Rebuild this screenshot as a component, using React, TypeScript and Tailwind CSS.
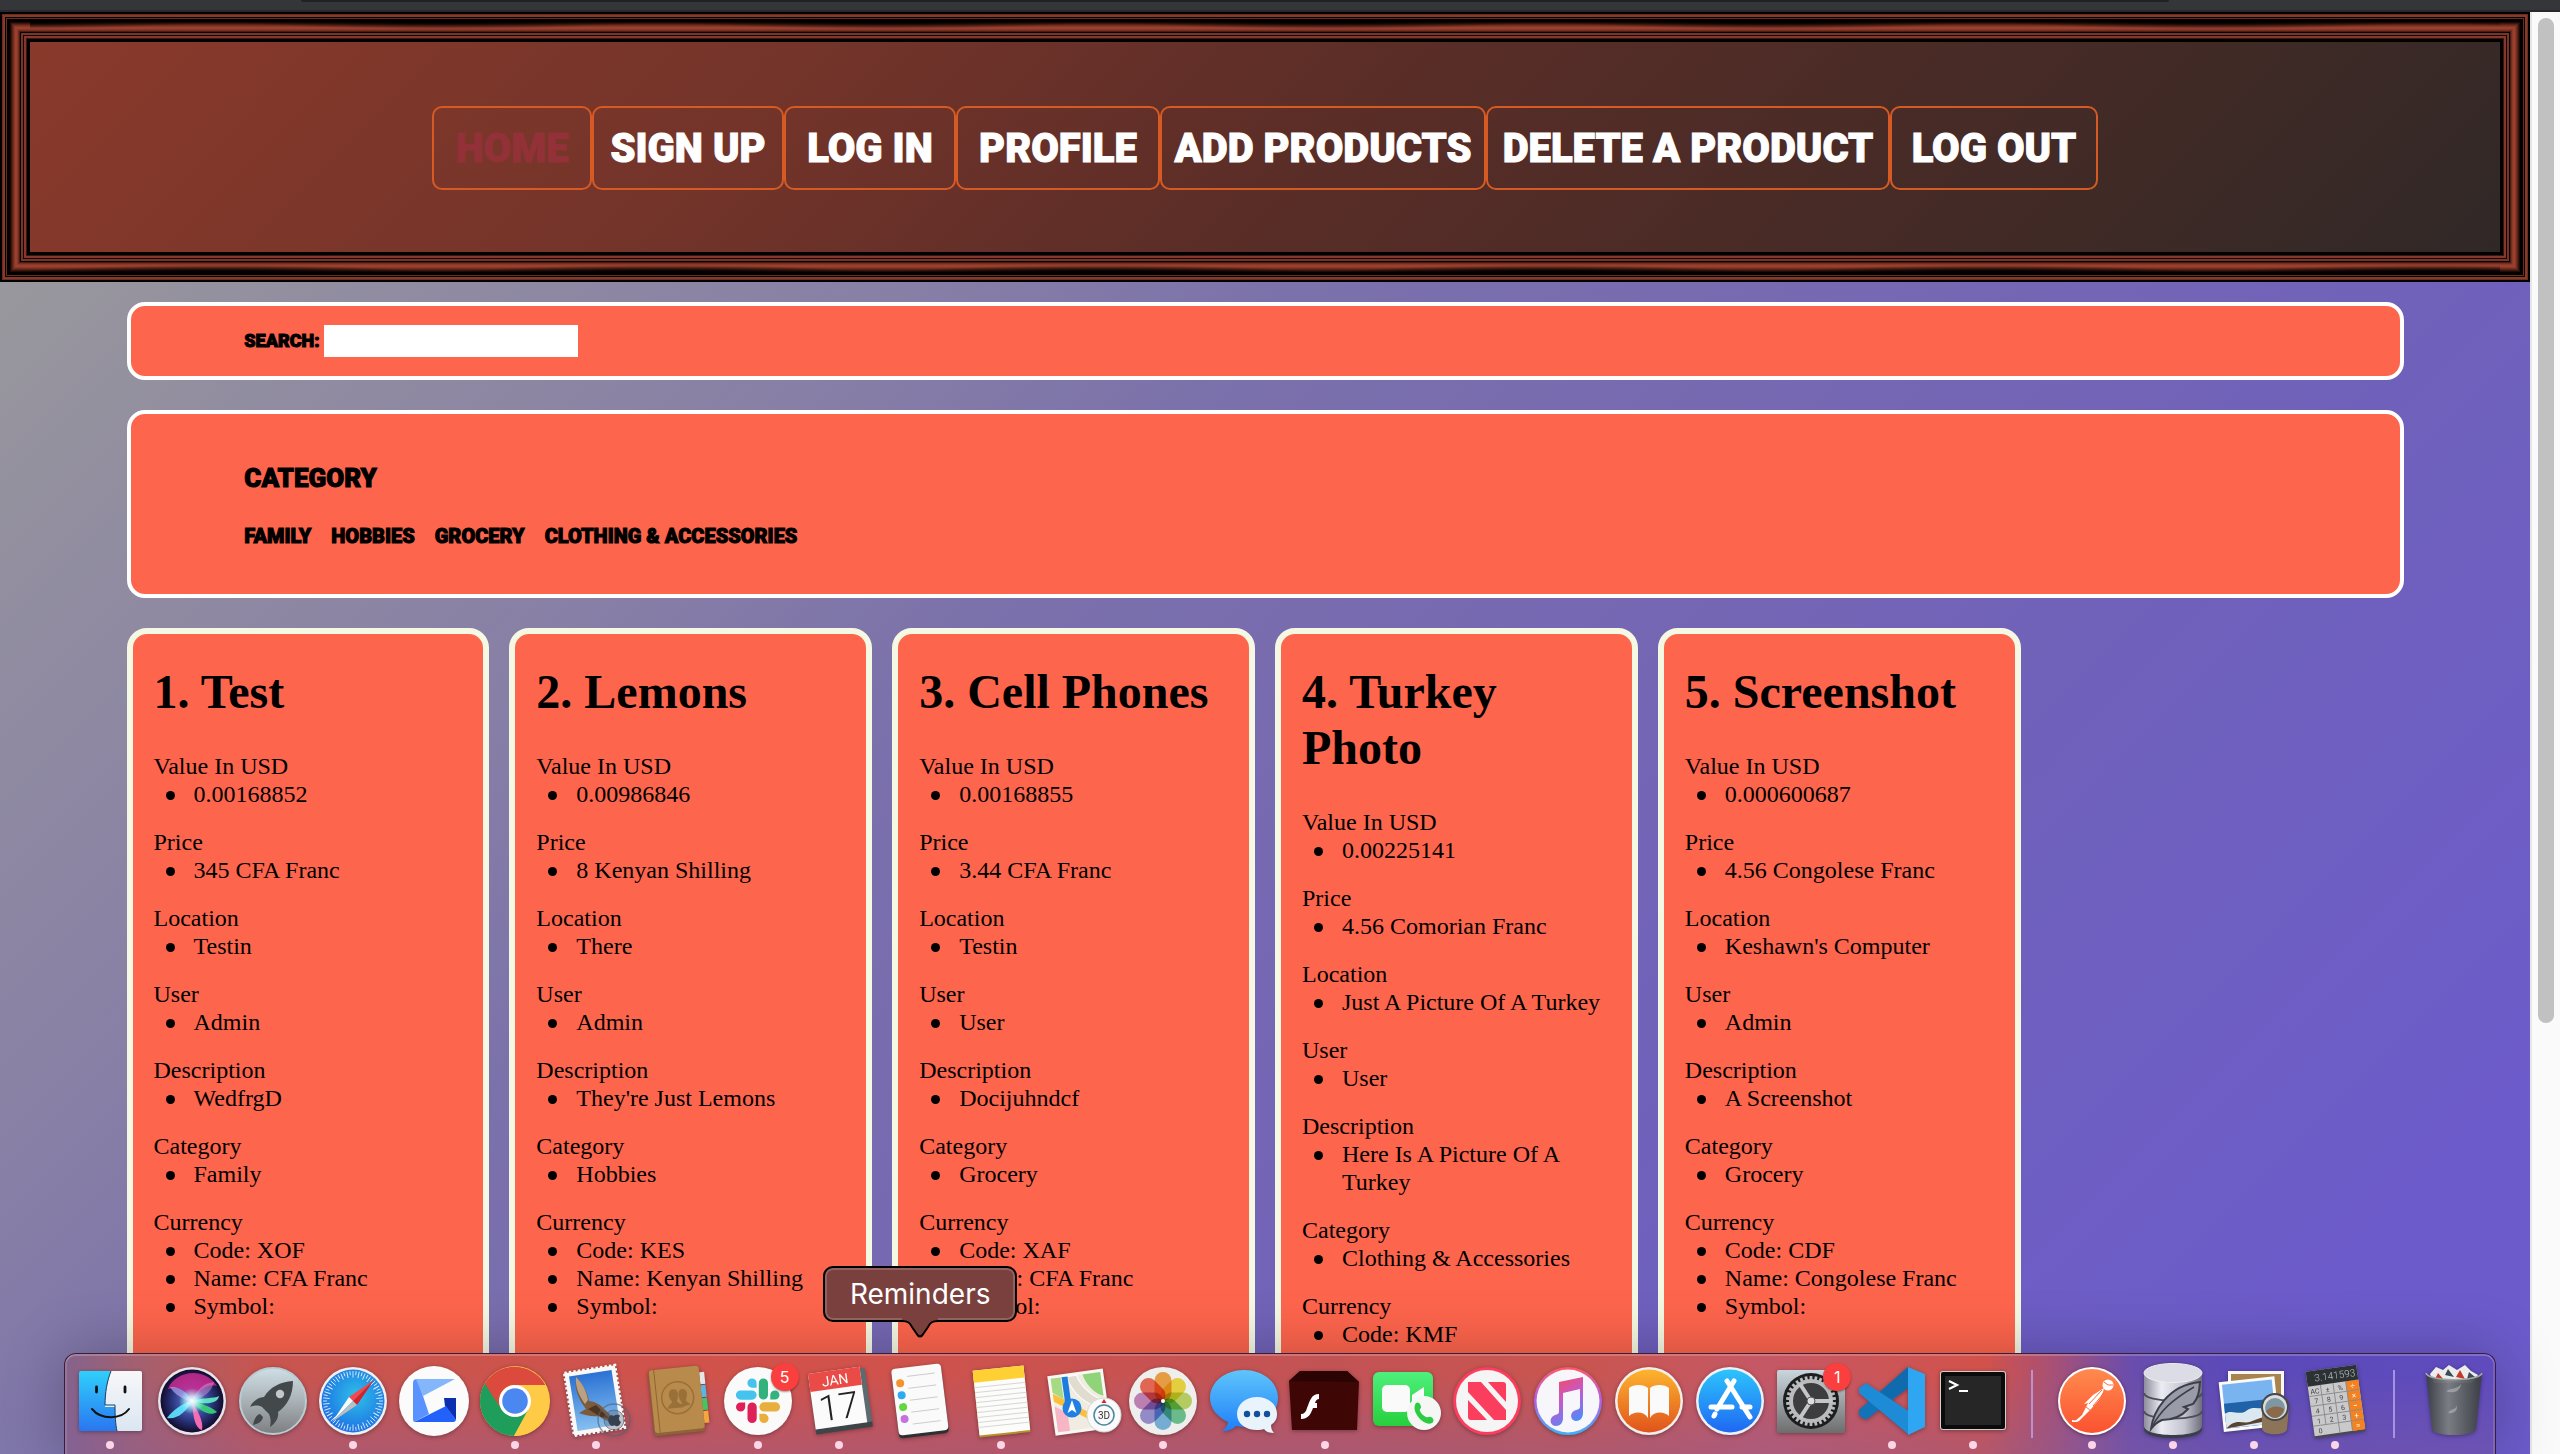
import type { ReactNode } from "react";

const DISPLAY = "font-['Roboto',sans-serif] font-black uppercase [-webkit-text-stroke:1px_currentColor]";

const navItems = [
  { label: "Home", size: "w-[160px]", active: true },
  { label: "Sign Up", size: "w-[192px]" },
  { label: "Log In", size: "w-[172px]" },
  { label: "Profile", size: "w-[204px]" },
  { label: "Add Products", size: "w-[326px]" },
  { label: "Delete A Product", size: "w-[404px]" },
  { label: "Log Out", size: "w-[208px]" },
];

const categories = ["Family", "Hobbies", "Grocery", "Clothing & Accessories"];

type Product = {
  title: string;
  fields: { label: string; values: string[] }[];
};

function product(
  title: string,
  value: string,
  price: string,
  location: string,
  user: string,
  description: string,
  category: string,
  code: string,
  name: string,
): Product {
  return {
    title,
    fields: [
      { label: "Value In USD", values: [value] },
      { label: "Price", values: [price] },
      { label: "Location", values: [location] },
      { label: "User", values: [user] },
      { label: "Description", values: [description] },
      { label: "Category", values: [category] },
      { label: "Currency", values: ["Code: " + code, "Name: " + name, "Symbol:"] },
    ],
  };
}

const products: Product[] = [
  product("1. Test", "0.00168852", "345 CFA Franc", "Testin", "Admin", "WedfrgD", "Family", "XOF", "CFA Franc"),
  product("2. Lemons", "0.00986846", "8 Kenyan Shilling", "There", "Admin", "They're Just Lemons", "Hobbies", "KES", "Kenyan Shilling"),
  product("3. Cell Phones", "0.00168855", "3.44 CFA Franc", "Testin", "User", "Docijuhndcf", "Grocery", "XAF", "CFA Franc"),
  product("4. Turkey Photo", "0.00225141", "4.56 Comorian Franc", "Just A Picture Of A Turkey", "User", "Here Is A Picture Of A Turkey", "Clothing & Accessories", "KMF", "Comorian Franc"),
  product("5. Screenshot", "0.000600687", "4.56 Congolese Franc", "Keshawn's Computer", "Admin", "A Screenshot", "Grocery", "CDF", "Congolese Franc"),
];

function Header() {
  return (
    <header className="relative flex h-[270px] shrink-0 items-center justify-center bg-[linear-gradient(135deg,#8b3a2b_0%,#74342a_30%,#5a2d27_52%,#412a26_80%,#2e2827_100%)] shadow-[inset_0_0_0_2px_#000,inset_0_0_0_3px_#6b2c20,inset_0_0_0_5px_#8a3929,inset_0_0_0_6px_#000,inset_0_0_0_7px_#6b2c20,inset_0_0_0_10px_#000,inset_0_0_0_11px_#1d0b07,inset_0_0_0_12px_#3c150d,inset_0_0_0_13px_#5a2318,inset_0_0_0_14px_#742e20,inset_0_0_0_15px_#8a3828,inset_0_0_0_17px_#9c402e,inset_0_0_0_18px_#8a3828,inset_0_0_0_19px_#742e20,inset_0_0_0_20px_#4a1d14,inset_0_0_0_21px_#000,inset_0_0_0_23px_#7c3325,inset_0_0_0_24px_#120604,inset_0_0_0_26px_#84372a,inset_0_0_0_27px_#3a160e,inset_0_0_0_30px_#000]">
      <div className="absolute inset-x-[30px] top-[7px] h-[10px] bg-[radial-gradient(ellipse_50%_100%_at_50%_0%,#000_30%,transparent_100%)] bg-[length:442px_10px] bg-[position:191px_0]" />
      <div className="absolute inset-x-[30px] bottom-[7px] h-[10px] bg-[radial-gradient(ellipse_50%_100%_at_50%_100%,#000_30%,transparent_100%)] bg-[length:442px_10px] bg-[position:412px_0]" />
      <nav className="flex pt-0.5">
        {navItems.map((n) => (
          <a
            key={n.label}
            href="#"
            className={`${DISPLAY} ${n.size} flex h-[84px] items-center justify-center whitespace-nowrap rounded-[10px] border-2 border-[#d65a24] pt-0.5 text-[40px] leading-none ${n.active ? "text-[#923137]" : "text-white"}`}
          >
            {n.label}
          </a>
        ))}
      </nav>
    </header>
  );
}

function Card({ item }: { item: Product }) {
  return (
    <article className="rounded-[20px] border-[6px] border-[#f5f9e3] bg-[#fe654d] px-[21px] py-[30px]">
      <h1 className="mb-8 text-[48px] font-bold leading-[56px]">{item.title}</h1>
      <dl className="flex flex-col gap-5">
        {item.fields.map((f) => (
          <div key={f.label}>
            <dt>{f.label}</dt>
            <dd>
              <ul className="pl-10">
                {f.values.map((v) => (
                  <li
                    key={v}
                    className="relative before:absolute before:-left-7 before:top-[11px] before:size-[9px] before:rounded-full before:bg-black"
                  >
                    {v}
                  </li>
                ))}
              </ul>
            </dd>
          </div>
        ))}
      </dl>
    </article>
  );
}

/* ---------- dock icons, all on an 80 × 80 grid ---------- */

function Icon({ children }: { children: ReactNode }) {
  return (
    <svg viewBox="0 0 80 80" className="size-20 overflow-visible drop-shadow-[0_1px_2px_rgba(0,0,0,0.35)]" aria-hidden="true">
      {children}
    </svg>
  );
}

function Grad({ id, from, to, mid }: { id: string; from: string; to: string; mid?: string }) {
  return (
    <linearGradient id={id} x1="0" y1="0" x2="0" y2="1">
      <stop offset="0" stopColor={from} />
      {mid && <stop offset=".5" stopColor={mid} />}
      <stop offset="1" stopColor={to} />
    </linearGradient>
  );
}

const spokes = (n: number) => Array.from({ length: n }, (_, i) => (i * 360) / n);

const FinderIcon = () => (
  <Icon>
    <defs>
      <Grad id="fi1" from="#2fd0fc" to="#2a76f0" />
      <Grad id="fi2" from="#f7f7f9" to="#dbe6f2" />
    </defs>
    <rect x="9" y="10" width="63" height="60" rx="2" fill="url(#fi1)" />
    <path d="M41 10h29a2 2 0 0 1 2 2v56a2 2 0 0 1-2 2H47c-1.500-7-2-13-2-24h-10c0-14 2-26 6-36z" fill="url(#fi2)" />
    <path d="M41 10c-4 10-6 22-6 34h10c0 11 .5 19 2 26" fill="none" stroke="#17405f" strokeWidth="1" />
    <path d="M26.500 26v5M55 26v5" stroke="#111" strokeWidth="2.800" strokeLinecap="round" />
    <path d="M22 48c9 11 29 11 37 0" fill="none" stroke="#111" strokeWidth="2" strokeLinecap="round" />
  </Icon>
);

const SiriIcon = () => (
  <Icon>
    <defs>
      <radialGradient id="si1" cx=".5" cy=".5" r=".5">
        <stop offset="0" stopColor="#6a8ce0" />
        <stop offset=".6" stopColor="#2d3a86" />
        <stop offset="1" stopColor="#120b2c" />
      </radialGradient>
      <radialGradient id="si2">
        <stop offset="0" stopColor="#fff" />
        <stop offset=".35" stopColor="#d9fbff" stopOpacity=".8" />
        <stop offset="1" stopColor="#8ff" stopOpacity="0" />
      </radialGradient>
    </defs>
    <circle cx="41" cy="40" r="34" fill="#e8e4ea" />
    <circle cx="41" cy="40" r="31.500" fill="url(#si1)" />
    <path d="M17 28c6-17 35-24 49-3-8-3-16 2-25 13-7-10-14-13-24-10z" fill="#d62a92" opacity=".8" />
    <path d="M41 40C30 43 22 49 16 57c10 2 20-7 25-17z" fill="#5fe8ff" opacity=".9" />
    <path d="M41 40c11-4 22-2 27-5-1 8-14 9-27 5z" fill="#62f0c6" opacity=".9" />
    <path d="M41 40c8 2 20 6 25 11-7 5-18-1-25-11z" fill="#37d67a" opacity=".9" />
    <path d="M41 40c5 9 12 20 10 29-8-2-9-17-10-29z" fill="#ff6fb4" opacity=".95" />
    <path d="M41 40c-4-8-12-15-22-14 4 7 13 13 22 14z" fill="#c6b4ff" opacity=".6" />
    <path d="M41 40c4-11 12-18 22-19-2 10-12 17-22 19z" fill="#f09ae0" opacity=".45" />
    <circle cx="41" cy="40" r="13" fill="url(#si2)" />
  </Icon>
);

const LaunchpadIcon = () => (
  <Icon>
    <defs><Grad id="la1" from="#cfdfe6" to="#7d7f80" mid="#a9b2b6" /></defs>
    <circle cx="41" cy="40" r="33" fill="url(#la1)" stroke="#b9cbd3" strokeWidth="2" />
    <path d="M61 20c-13 1-23 6-29 16-5 0-11 4-14 10 4-2 9-2 12 0l7 7c2 4 2 9 1 13 6-4 9-10 8-15 9-6 15-17 15-31zM28 53c-4 1-6 6-7 11 5-1 9-3 10-8z" fill="#43484b" />
    <circle cx="48" cy="33" r="4.200" fill="#bfc8cc" />
  </Icon>
);

const SafariIcon = () => (
  <Icon>
    <defs>
      <radialGradient id="sf1" cx=".55" cy=".42" r=".6">
        <stop offset="0" stopColor="#2ec0e8" />
        <stop offset="1" stopColor="#1c6fe4" />
      </radialGradient>
    </defs>
    <circle cx="40" cy="40" r="34" fill="#eef0f2" />
    <circle cx="40" cy="40" r="31.500" fill="url(#sf1)" />
    {spokes(60).map((a, i) => (
      <path key={a} d={i % 2 ? "M40 10v4" : "M40 10v6.500"} stroke="#fff" strokeWidth=".9" opacity=".85" transform={`rotate(${a} 40 40)`} />
    ))}
    <path d="M61 19 36 36l4 4z" fill="#f7474a" />
    <path d="m61 19-17 25-4-4z" fill="#d3222a" />
    <path d="M19 61 36 36l4 4z" fill="#fafafa" />
    <path d="m19 61 25-17-4-4z" fill="#b9bec4" />
  </Icon>
);

const RecorderIcon = () => (
  <Icon>
    <circle cx="40" cy="40" r="35" fill="#fbfbfc" />
    <path d="M19 22a4 4 0 0 1 4-4l6 17 6 18-15 8a4 4 0 0 1-1-3z" fill="#5a92ff" />
    <path d="M22 18h39L29 35z" fill="#84b6fb" />
    <path d="M50 37h12v22L51 45z" fill="#0b2fae" />
    <path d="M20 61 52 45l10 14a3 3 0 0 1-3 2z" fill="#2262fb" />
  </Icon>
);

const ChromeIcon = () => (
  <Icon>
    <circle cx="40" cy="40" r="35" fill="#ffca45" />
    <path d="M40 40h-8L9.700 22.500A35 35 0 0 0 39 75l14-26z" fill="#1f9e5b" />
    <path d="M9.700 22.500A35 35 0 0 1 70.300 24H40A16 16 0 0 0 26 48z" fill="#dc4a3e" />
    <path d="M40 24h30.500A35 35 0 0 1 39 75l15-27z" fill="#ffca45" />
    <circle cx="40" cy="40" r="16" fill="#fff" />
    <circle cx="40" cy="40" r="12.800" fill="#4b87f0" />
  </Icon>
);

const MailIcon = () => (
  <Icon>
    <defs><Grad id="ma1" from="#2a72d4" to="#86bff0" /></defs>
    <g transform="rotate(-9 38 39)">
      <rect x="13" y="8" width="51" height="63" fill="#f8f8f8" stroke="#f8f8f8" strokeWidth="3" strokeDasharray="2.500 2" />
      <rect x="17" y="12" width="43" height="55" fill="url(#ma1)" />
    </g>
    <path d="M20 16c5 5 11 13 13 24 7 1 12 4 15 8 5 4 8 6 8 13-5-1-10-3-13-6-7 1-14-1-20-3l7-4c-7-9-12-20-10-32z" fill="#7c5a3c" />
    <path d="M20 16c5 5 10 12 12 23l-3 4c-6-8-10-17-9-27z" fill="#b9a284" />
    <path d="m32 48 8-4 13 13c-5 0-9-1-13-4z" fill="#4c3523" />
    <circle cx="58" cy="59" r="16" fill="none" stroke="#59616f" strokeOpacity=".65" strokeWidth="1.500" />
    <circle cx="58" cy="59" r="10" fill="#59616f" fillOpacity=".35" stroke="#59616f" strokeOpacity=".7" />
    <path d="M58 55c2-2 6-1 6 0-2 2-1 5 1 6-1 3-3 5-5 4-2-.6-2-.6-4 0-3-1-5-6-3-9 1-2 3-2 5-1z" fill="#36404e" />
  </Icon>
);

const ContactsIcon = () => (
  <Icon>
    <g transform="rotate(-6 38 40)">
      <path d="M62 14h8v12h-8z" fill="#e4e6e8" /><path d="M62 27h8v12h-8z" fill="#5bb5e0" />
      <path d="M62 40h8v12h-8z" fill="#45c463" /><path d="M62 53h8v12h-8z" fill="#f2a63b" />
      <rect x="14" y="7" width="51" height="66" rx="3" fill="#8c6435" />
      <rect x="15" y="7" width="50" height="63" rx="3" fill="#b88a4c" />
      <path d="M20 7v63" stroke="#8e672f" strokeWidth="1" />
      <circle cx="41" cy="37" r="16" fill="none" stroke="#987038" strokeWidth="1.500" />
      <path d="M30 47c1-4 5-4 5-7-4-4-3-12 2-12s6 5 3 12c0 3 5 3 6 7zM41 47c6-4 3-5 2-8-2-6 0-11 4-10 5 1 4 7 2 11 0 3 3 3 4 5z" fill="#987038" />
    </g>
  </Icon>
);

const SlackIcon = () => (
  <Icon>
    <circle cx="40" cy="40" r="34" fill="#fbfafb" />
    <path d="M34 17.500a4.600 4.600 0 0 1 4.600 4.600v4.600H34a4.600 4.600 0 0 1 0-9.200zM22.500 29.500h11.500a4.600 4.600 0 0 1 0 9.200H22.500a4.600 4.600 0 0 1 0-9.200z" fill="#44c3ee" />
    <path d="M61.500 34a4.600 4.600 0 0 1-4.600 4.600h-4.600V34a4.600 4.600 0 0 1 9.200 0zM50 22v12a4.600 4.600 0 0 1-9.200 0V22a4.600 4.600 0 0 1 9.200 0z" fill="#33b27e" />
    <path d="M46 62a4.600 4.600 0 0 1-4.600-4.600v-4.600H46a4.600 4.600 0 0 1 0 9.200zM57.500 50.500H46a4.600 4.600 0 0 1 0-9.200h11.500a4.600 4.600 0 0 1 0 9.200z" fill="#e9af3c" />
    <path d="M18 46a4.600 4.600 0 0 1 4.600-4.600h4.600V46a4.600 4.600 0 0 1-9.200 0zM29.500 57.500V46a4.600 4.600 0 0 1 9.200 0v11.500a4.600 4.600 0 0 1-9.200 0z" fill="#dd2058" />
  </Icon>
);

const CalendarIcon = () => (
  <Icon>
    <g transform="rotate(-8 40 40)">
      <path d="M13 11h57v57H13z" fill="#5c6b70" />
      <rect x="13" y="65" width="57" height="5" fill="#3d4548" />
      <rect x="13" y="9" width="52" height="56" fill="#fbfbfb" />
      <rect x="13" y="9" width="52" height="18" fill="#ea4b46" />
      <text x="39" y="23.500" fontSize="14" textAnchor="middle" fill="#fff" fontFamily="Roboto, sans-serif">JAN</text>
      <text x="39" y="58" fontSize="36" fontWeight="300" textAnchor="middle" fill="#222" fontFamily="Roboto, sans-serif">17</text>
    </g>
  </Icon>
);

const RemindersIcon = () => (
  <Icon>
    <g transform="rotate(-7 40 40)">
      <rect x="15" y="6" width="50" height="69" rx="4" fill="#2d2f33" />
      <rect x="15" y="5" width="50" height="67" rx="4" fill="#fafafa" />
      {["#f7912f", "#2caaf2", "#63d642", "#c571e0"].map((c, i) => (
        <g key={c}>
          <circle cx="22.500" cy={20 + i * 12} r="4" fill={c} />
          <path d={`M30 ${14 + i * 12}h28`} stroke="#c9c9cd" strokeWidth=".9" />
        </g>
      ))}
      <path d="M30 62h28" stroke="#c9c9cd" strokeWidth=".9" />
    </g>
  </Icon>
);

const NotesIcon = () => (
  <Icon>
    <g transform="rotate(-6 40 40)">
      <rect x="15" y="8" width="51" height="66" fill="#b98f2a" />
      <rect x="15" y="7" width="51" height="65" fill="#fcfcfa" />
      <rect x="15" y="7" width="51" height="12" fill="#ffd034" />
      {[24, 29, 34, 39, 44, 49, 54, 59, 64].map((y) => (
        <path key={y} d={`M15 ${y}h51`} stroke="#d3d3d3" strokeWidth=".9" />
      ))}
    </g>
  </Icon>
);

const MapsIcon = () => (
  <Icon>
    <g transform="rotate(-8 38 40)">
      <rect x="9" y="11" width="56" height="60" fill="#f9f7f2" />
      <path d="M12 14h50v54H12z" fill="#f1ece2" />
      <path d="M12 14h10v22L12 28z" fill="#a6da84" /><path d="M44 14h18v24c-8-3-15-12-18-24z" fill="#8fd478" />
      <path d="M28 14h10c3 12 13 24 24 29v9C46 46 32 34 28 14z" fill="#e0dccf" stroke="#fff" />
      <path d="M12 29 62 64v4h-5L12 37z" fill="#fdbf3a" /><path d="M12 42l12 8v18H12z" fill="#f7b6c6" />
      <path d="M23 14h6v32h-6z" fill="#1c7ce0" />
    </g>
    <circle cx="30" cy="47" r="9.500" fill="#1f7fe2" /><path d="m30 39 4.500 13L30 49l-4.500 3z" fill="#fff" />
    <circle cx="62" cy="54" r="17" fill="#fafafa" stroke="#d5d8db" />
    <circle cx="62" cy="54" r="10" fill="none" stroke="#4a86a4" strokeWidth="1.500" />
    <text x="62" y="58" fontSize="10" textAnchor="middle" fill="#333" fontFamily="Roboto, sans-serif">3D</text>
    <path d="m62 38 2.500 4h-5z" fill="#e32020" />
  </Icon>
);

const PhotosIcon = () => (
  <Icon>
    <circle cx="40" cy="40" r="34" fill="#eeeeec" />
    {["#f59b2e", "#f3d92c", "#b7d554", "#5fbf86", "#6aaee0", "#8f86cf", "#c279b8", "#ee5a44"].map((c, i) => (
      <rect key={c} x="31.500" y="11" width="17" height="29" rx="8.500" fill={c} opacity=".88" className="mix-blend-multiply" transform={`rotate(${i * 45} 40 40)`} />
    ))}
    <circle cx="40" cy="40" r="2" fill="#fff" />
  </Icon>
);

const MessagesIcon = () => (
  <Icon>
    <defs><Grad id="me1" from="#5fc5fb" to="#1f80f8" /></defs>
    <path d="M40 9c19 0 34 12 34 28S59 66 40 66l-8-1c-4 4-9 5-14 5 4-3 6-6 6-9C13 56 6 47 6 37 6 21 21 9 40 9z" fill="url(#me1)" />
    <path d="M53 36c11 0 20 7 20 17 0 5-2 8-6 11 0 3 1 6 3 8-4 0-8-1-10-4-2 .6-4 1-7 1-11 0-20-6-20-16s9-17 20-17z" fill="#e9f3fc" />
    <circle cx="43" cy="53" r="3.200" fill="#13509b" /><circle cx="53" cy="53" r="3.200" fill="#13509b" /><circle cx="63" cy="53" r="3.200" fill="#13509b" />
  </Icon>
);

const FlashIcon = () => (
  <Icon>
    <path d="M4 20 15 10h47l12 11-2 48H7z" fill="#3f0606" />
    <path d="M4 20 15 10h47l12 11z" fill="#2b0303" />
    <path d="M34 33c-8 0-9 7-12 14-1 4-3 6-6 6v5c8 0 10-6 12-11h4v-5h-2c1-3 2-4 4-4z" fill="#fff" />
  </Icon>
);

const FaceTimeIcon = () => (
  <Icon>
    <defs><Grad id="ft1" from="#4ef07c" to="#27cf3d" /></defs>
    <rect x="7" y="11" width="60" height="54" rx="6" fill="url(#ft1)" />
    <rect x="16" y="24" width="28" height="27" rx="5" fill="#fafafa" />
    <path d="m46 34 12-8v24l-12-8z" fill="#fafafa" />
    <circle cx="58" cy="52" r="17" fill="#f5f7f5" />
    <path d="M50 42c3-2 5 2 5 4s-2 2-1 4c1 3 4 5 6 6s3-1 5 0 4 4 1 6c-8 4-22-12-16-20z" fill="#2ccc42" />
  </Icon>
);

const NewsIcon = () => (
  <Icon>
    <circle cx="40" cy="40" r="34" fill="#fb3d5e" /><circle cx="40" cy="40" r="31" fill="#f6f5f6" />
    <path d="M21 21h13l25 28v10H47L21 31zM21 39l19 20H24a3 3 0 0 1-3-3zM59 41 41 21h15a3 3 0 0 1 3 3z" fill="#fb3d5e" />
  </Icon>
);

const MusicIcon = () => (
  <Icon>
    <defs>
      <Grad id="mu1" from="#fb5a66" to="#3db4f6" mid="#b45ee8" />
      <linearGradient id="mu2" x1=".2" y1="0" x2=".6" y2="1"><stop offset="0" stopColor="#f44b5f" /><stop offset=".5" stopColor="#c25ad0" /><stop offset="1" stopColor="#4a8cfb" /></linearGradient>
    </defs>
    <circle cx="40" cy="40" r="34" fill="url(#mu1)" /><circle cx="40" cy="40" r="31.500" fill="#f7f6fa" />
    <path d="M31 21 55 16v36c0 5-3 8-7 8-6 0-7-9 0-11 3-1 4-1 4-4V28l-17 4v25c0 5-3 8-7 8-6 0-8-8-1-11 3-1 4-1 4-4z" fill="url(#mu2)" />
  </Icon>
);

const BooksIcon = () => (
  <Icon>
    <defs><Grad id="bo1" from="#fdb42e" to="#e0531c" /></defs>
    <circle cx="40" cy="40" r="34" fill="#f1eeec" /><circle cx="40" cy="40" r="31.500" fill="url(#bo1)" />
    <path d="M39 27c-4-4-15-4-19 0v28c5-5 15-5 19 2zM41 27c4-4 15-4 19 0v28c-5-5-15-5-19 2z" fill="#fafafa" />
  </Icon>
);

const AppStoreIcon = () => (
  <Icon>
    <defs><Grad id="as1" from="#2cc4fc" to="#1f68f2" /></defs>
    <circle cx="40" cy="40" r="34" fill="#eef1f5" /><circle cx="40" cy="40" r="31.500" fill="url(#as1)" />
    <path d="m44 20-17 28M37 20l23 36M21 46h21M52 46h8M25 53l-1 2" stroke="#fff" strokeWidth="5" strokeLinecap="round" />
  </Icon>
);

const SettingsIcon = () => (
  <Icon>
    <defs><Grad id="se1" from="#c9d6dd" to="#6d6d6d" /></defs>
    <rect x="6" y="9" width="68" height="63" rx="2" fill="url(#se1)" />
    <circle cx="40" cy="40" r="28" fill="#1d1d1f" />
    {spokes(30).map((a) => (
      <rect key={a} x="38.600" y="15" width="2.800" height="6" fill="#b9bbbd" transform={`rotate(${a} 40 40)`} />
    ))}
    <circle cx="40" cy="40" r="20" fill="#3d3d3f" stroke="#b9bbbd" strokeWidth="4" />
    <path d="M40 40 29 23M40 40h21M40 40 29 57" stroke="#c4c6c8" strokeWidth="4" />
    <circle cx="40" cy="40" r="4" fill="#ddd" stroke="#555" />
  </Icon>
);

const CodeIcon = () => (
  <Icon>
    <path d="M56 6 7 49v5l5 4h3l41-31z" fill="#1173b8" />
    <path d="M56 6 26 33l8 9 22-15z" fill="#0f6bad" />
    <path d="m14 22-7 5v5l49 41 2-22z" fill="#1d8bd6" />
    <path d="m56 6 17 7v53l-17 8z" fill="#2ea6f2" />
  </Icon>
);

const TerminalIcon = () => (
  <Icon>
    <rect x="7" y="10" width="66" height="59" rx="3" fill="#cfcfcf" />
    <rect x="8" y="11" width="64" height="57" rx="2" fill="#0b0b0b" />
    <rect x="12" y="15" width="56" height="49" fill="#262626" />
    <path d="m16 20 8 4-8 4M26 30h9" fill="none" stroke="#fff" strokeWidth="2.200" />
  </Icon>
);

const PostmanIcon = () => (
  <Icon>
    <defs><Grad id="po1" from="#ff8a4e" to="#fb5230" /></defs>
    <circle cx="40" cy="40" r="34" fill="#fff" /><circle cx="40" cy="40" r="32" fill="url(#po1)" />
    <circle cx="56" cy="24" r="5.500" fill="#fff" /><path d="M56 24h5M56 24l-4-3" stroke="#fb6a3c" strokeWidth="1" />
    <path d="M52 27 41 34l-9 9 4-1-6 12-8 7 5-1 12-12 8-9 4-8z" fill="#fff" />
    <path d="m50 29-13 14M52 32 41 45M33 45l6 5" stroke="#fb6a3c" strokeWidth="1" />
    <path d="m20 59 7 1-3 1h-4z" fill="#fff" />
  </Icon>
);

const DatabaseIcon = () => (
  <Icon>
    <defs>
      <linearGradient id="db1"><stop offset="0" stopColor="#8c8c9c" /><stop offset=".3" stopColor="#ececf4" /><stop offset=".7" stopColor="#c3c3d0" /><stop offset="1" stopColor="#6d6d7c" /></linearGradient>
    </defs>
    <path d="M11 12v56c0 12 58 12 58 0V12z" fill="#3a3f46" />
    <path d="M11 12v53c0 12 58 12 58 0V12z" fill="url(#db1)" />
    <ellipse cx="40" cy="12" rx="29" ry="9.500" fill="#dcdce6" stroke="#eee" />
    <path d="M11 32c0 10 58 10 58 0M11 50c0 10 58 10 58 0" fill="none" stroke="#4a4d57" strokeWidth="2" />
    <path d="M18 68c2-16 16-44 49-47-1 9-1 15-7 22l-9 3 4 2c-7 8-15 11-26 11-5 2-8 5-11 9z" fill="#9a9ba8" stroke="#3c3f49" strokeWidth="2" />
    <path d="M19 66c8-16 20-27 42-40" fill="none" stroke="#3c3f49" strokeWidth="1.500" />
  </Icon>
);

const PreviewIcon = () => (
  <Icon>
    <rect x="14" y="10" width="56" height="48" fill="#f7f7f7" /><rect x="17" y="13" width="50" height="42" fill="#a8834d" />
    <g transform="rotate(-6 36 42)">
      <rect x="7" y="18" width="56" height="50" fill="#fafafa" />
      <rect x="10" y="21" width="50" height="44" fill="#79b4f0" />
      <path d="M10 40h50v25H10z" fill="#1f62a8" />
      <path d="M10 50c8-4 14 4 22-1s16 3 28-2v18H10z" fill="#dbe8f0" />
      <path d="M10 65c8-8 14-5 20-4s20-8 30 0z" fill="#5b4334" />
    </g>
    <path d="M48 48v20c2 7 24 7 25 0l2-22z" fill="#8c7458" />
    <circle cx="61" cy="46" r="14" fill="#47474a" /><circle cx="61" cy="46" r="12" fill="#d8dde0" />
    <circle cx="61" cy="47" r="10" fill="#7f96a3" /><path d="M52 50c5-5 12-6 18-2-1 5-5 9-9 9s-7-3-9-7z" fill="#8a6a4a" />
  </Icon>
);

const CalculatorIcon = () => (
  <Icon>
    <g transform="rotate(-8 40 40)">
      <rect x="15" y="8" width="51" height="66" fill="#4a4a4a" />
      <rect x="15" y="7" width="51" height="65" fill="#c9c9cb" />
      <rect x="53" y="22" width="13" height="50" fill="#f58220" />
      <rect x="15" y="7" width="51" height="15" fill="#2c3134" />
      <text x="64" y="18" fontSize="10" fontWeight="300" textAnchor="end" fill="#b9c3c6" fontFamily="Roboto, sans-serif">3.141593</text>
      <path d="M15 32h51M15 42h51M15 52h51M15 62h51M27.800 22v40M40.500 22v50M53.300 22v50" stroke="#8b8b8d" strokeWidth=".9" />
      {["AC", "±", "%", "7", "8", "9", "4", "5", "6", "1", "2", "3"].map((t, i) => (
        <text key={t} x={21.5 + (i % 3) * 12.7} y={30 + Math.floor(i / 3) * 10} fontSize="7" textAnchor="middle" fill="#444" fontFamily="Roboto, sans-serif">{t}</text>
      ))}
      <text x="21.500" y="70" fontSize="7" textAnchor="middle" fill="#444" fontFamily="Roboto, sans-serif">0</text>
      {["÷", "×", "−", "+", "="].map((t, i) => (
        <text key={t} x="59.500" y={30 + i * 10} fontSize="8" textAnchor="middle" fill="#fff" fontFamily="Roboto, sans-serif">{t}</text>
      ))}
    </g>
  </Icon>
);

const TrashIcon = () => (
  <Icon>
    <defs>
      <linearGradient id="tr1"><stop offset="0" stopColor="#3b3e42" /><stop offset=".4" stopColor="#7d8083" /><stop offset="1" stopColor="#3b3e42" /></linearGradient>
    </defs>
    <path d="m16 13 6-7 7 3 6-5 8 5 8-5 6 6 7 4-6 8H20z" fill="#ececec" />
    <path d="m24 12 6 7-9-1zM46 9l5 9-9-2z" fill="#c23a2b" /><path d="m34 8 6 8-9-2zM55 11l6 5-8 2z" fill="#3b4a58" />
    <path d="M12 12c2 9 54 9 56 0l-6 56c-1 8-43 8-44 0z" fill="url(#tr1)" opacity=".95" />
    <path d="M12 12c2 9 54 9 56 0" fill="none" stroke="#a2a5a8" strokeWidth="1.500" />
    <path d="M32 30c6-3 12-2 15-7-1 8-8 10-15 7zM34 52c3-5 9-3 8-8 3 5-2 9-8 8z" fill="#c4c7ca" opacity=".5" />
  </Icon>
);

type DockItem = { name: string; icon: () => ReactNode; open?: boolean; badge?: string; tip?: boolean } | "separator";

const dockItems: DockItem[] = [
  { name: "Finder", icon: FinderIcon, open: true },
  { name: "Siri", icon: SiriIcon },
  { name: "Launchpad", icon: LaunchpadIcon },
  { name: "Safari", icon: SafariIcon, open: true },
  { name: "Screen Recorder", icon: RecorderIcon },
  { name: "Chrome", icon: ChromeIcon, open: true },
  { name: "Mail", icon: MailIcon, open: true },
  { name: "Contacts", icon: ContactsIcon },
  { name: "Slack", icon: SlackIcon, open: true, badge: "5" },
  { name: "Calendar", icon: CalendarIcon, open: true },
  { name: "Reminders", icon: RemindersIcon, tip: true },
  { name: "Notes", icon: NotesIcon, open: true },
  { name: "Maps", icon: MapsIcon },
  { name: "Photos", icon: PhotosIcon, open: true },
  { name: "Messages", icon: MessagesIcon },
  { name: "Flash", icon: FlashIcon, open: true },
  { name: "FaceTime", icon: FaceTimeIcon },
  { name: "News", icon: NewsIcon },
  { name: "Music", icon: MusicIcon },
  { name: "Books", icon: BooksIcon },
  { name: "App Store", icon: AppStoreIcon },
  { name: "System Preferences", icon: SettingsIcon, badge: "1" },
  { name: "Code", icon: CodeIcon, open: true },
  { name: "Terminal", icon: TerminalIcon, open: true },
  "separator",
  { name: "Postman", icon: PostmanIcon, open: true },
  { name: "SQLite", icon: DatabaseIcon, open: true },
  { name: "Preview", icon: PreviewIcon, open: true },
  { name: "Calculator", icon: CalculatorIcon, open: true },
  "separator",
  { name: "Trash", icon: TrashIcon },
];

function Tooltip({ text }: { text: string }) {
  return (
    <div className="absolute bottom-full left-1/2 z-10 mb-8 flex h-14 w-[194px] -translate-x-1/2 items-center justify-center rounded-[10px] border-2 border-black bg-[#7a403d] font-['Inter',sans-serif] text-[28px] leading-none text-white shadow-[inset_0_0_0_2px_rgba(255,255,255,0.18)]">
      {text}
      <svg viewBox="0 0 36 20" className="absolute left-1/2 top-[50px] h-5 w-9 -translate-x-1/2" aria-hidden="true">
        <path d="M0 0h36v3c-6 0-8 2-10 6l-5.500 8q-2.500 3-5 0L10 9c-2-4-4-6-10-6z" fill="#7a403d" />
        <path d="M0 3c6 0 8 2 10 6l5.500 8q2.500 3 5 0L26 9c2-4 4-6 10-6" fill="none" stroke="#000" strokeWidth="2" />
      </svg>
    </div>
  );
}

function Dock() {
  return (
    <footer className="absolute inset-x-16 bottom-0 flex h-[101px] rounded-t-[12px] border border-b-0 border-[#3b1c3a] bg-[linear-gradient(180deg,rgba(120,90,160,0)_20%,rgba(130,95,160,0.38)_100%),linear-gradient(90deg,#84638c_0%,#a4606f_3%,#c7554f_8%,#d2524a_30%,#c25355_52%,#c9554f_62%,#c45865_70%,#d2524a_79%,#a45078_82%,#6a4dac_85%,#5c4ab9_89%,#5f4bbd_100%)] pl-[5px] pr-px shadow-[inset_0_2px_0_rgba(255,255,255,0.2),inset_2px_0_0_rgba(255,255,255,0.12),inset_-2px_0_0_rgba(255,255,255,0.12),0_0_60px_rgba(0,0,0,0.25)]">
      {dockItems.map((item, i) => {
        if (item === "separator") {
          return (
            <div key={i} className="flex w-[38px] justify-center py-4">
              <div className="w-0.5 bg-[#b9a2ee]/80" />
            </div>
          );
        }
        const Glyph = item.icon;
        return (
          <div key={item.name} className="relative flex min-w-0 flex-1 flex-col items-center pt-[7px]">
            {item.tip && <Tooltip text={item.name} />}
            <button type="button" aria-label={item.name} className="block">
              <Glyph />
            </button>
            {item.open && <span className="size-2 rounded-full bg-[#fcd5e6]" />}
            {item.badge && (
              <span className="absolute right-0 top-[9px] flex size-7 items-center justify-center rounded-full bg-[#fb3e3e] font-['Inter',sans-serif] text-[16px] leading-none text-white shadow-[0_1px_2px_rgba(0,0,0,0.4)]">
                {item.badge}
              </span>
            )}
          </div>
        );
      })}
    </footer>
  );
}

export default function App() {
  return (
    <div className="relative flex h-screen flex-col overflow-hidden bg-[#35363a] font-['Liberation_Serif',serif] text-[24px] leading-7 text-black">
      <div className="flex h-3 shrink-0 justify-center border-b-2 border-[#28292c]">
        <div className="mr-[90px] h-0.5 w-[73%] rounded-b bg-[#202124]" />
      </div>
      <div className="flex min-h-0 flex-1">
        <div className="flex min-w-0 flex-1 flex-col overflow-hidden bg-[linear-gradient(135deg,#9c9c9b_3%,#928ea0_15%,#877fa6_30%,#7b71ab_40%,#7566b4_58%,#6f61bb_70%,#6c5bcb_92%)]">
          <Header />
          <main className="mx-[5%] flex flex-col gap-[30px] pt-5">
            <form className="flex h-[78px] items-center rounded-[18px] border-4 border-white bg-[#fe654d] pl-[5%]">
              <label htmlFor="search" className={`${DISPLAY} w-[80px] whitespace-nowrap text-[18px]`}>
                Search:
              </label>
              <input id="search" type="text" className="h-8 w-[254px] bg-white px-1 outline-none" />
            </form>
            <section className="h-[188px] rounded-[18px] border-4 border-white bg-[#fe654d] pl-[5%] pt-[46px]">
              <h2 className={`${DISPLAY} text-[26px] leading-9`}>Category</h2>
              <ul className={`${DISPLAY} flex gap-5 pt-7 text-[20px] leading-6`}>
                {categories.map((c) => (
                  <li key={c}>
                    <a href="#">{c}</a>
                  </li>
                ))}
              </ul>
            </section>
            <div className="grid grid-cols-6 gap-5">
              {products.map((p) => (
                <Card key={p.title} item={p} />
              ))}
            </div>
          </main>
        </div>
        <div className="flex w-[30px] shrink-0 justify-center border-l-2 border-[#e6e6e6] bg-[#fafafa] pt-1.5">
          <div className="h-[70%] w-4 rounded-full bg-[#c1c1c1]" />
        </div>
      </div>
      <Dock />
    </div>
  );
}
